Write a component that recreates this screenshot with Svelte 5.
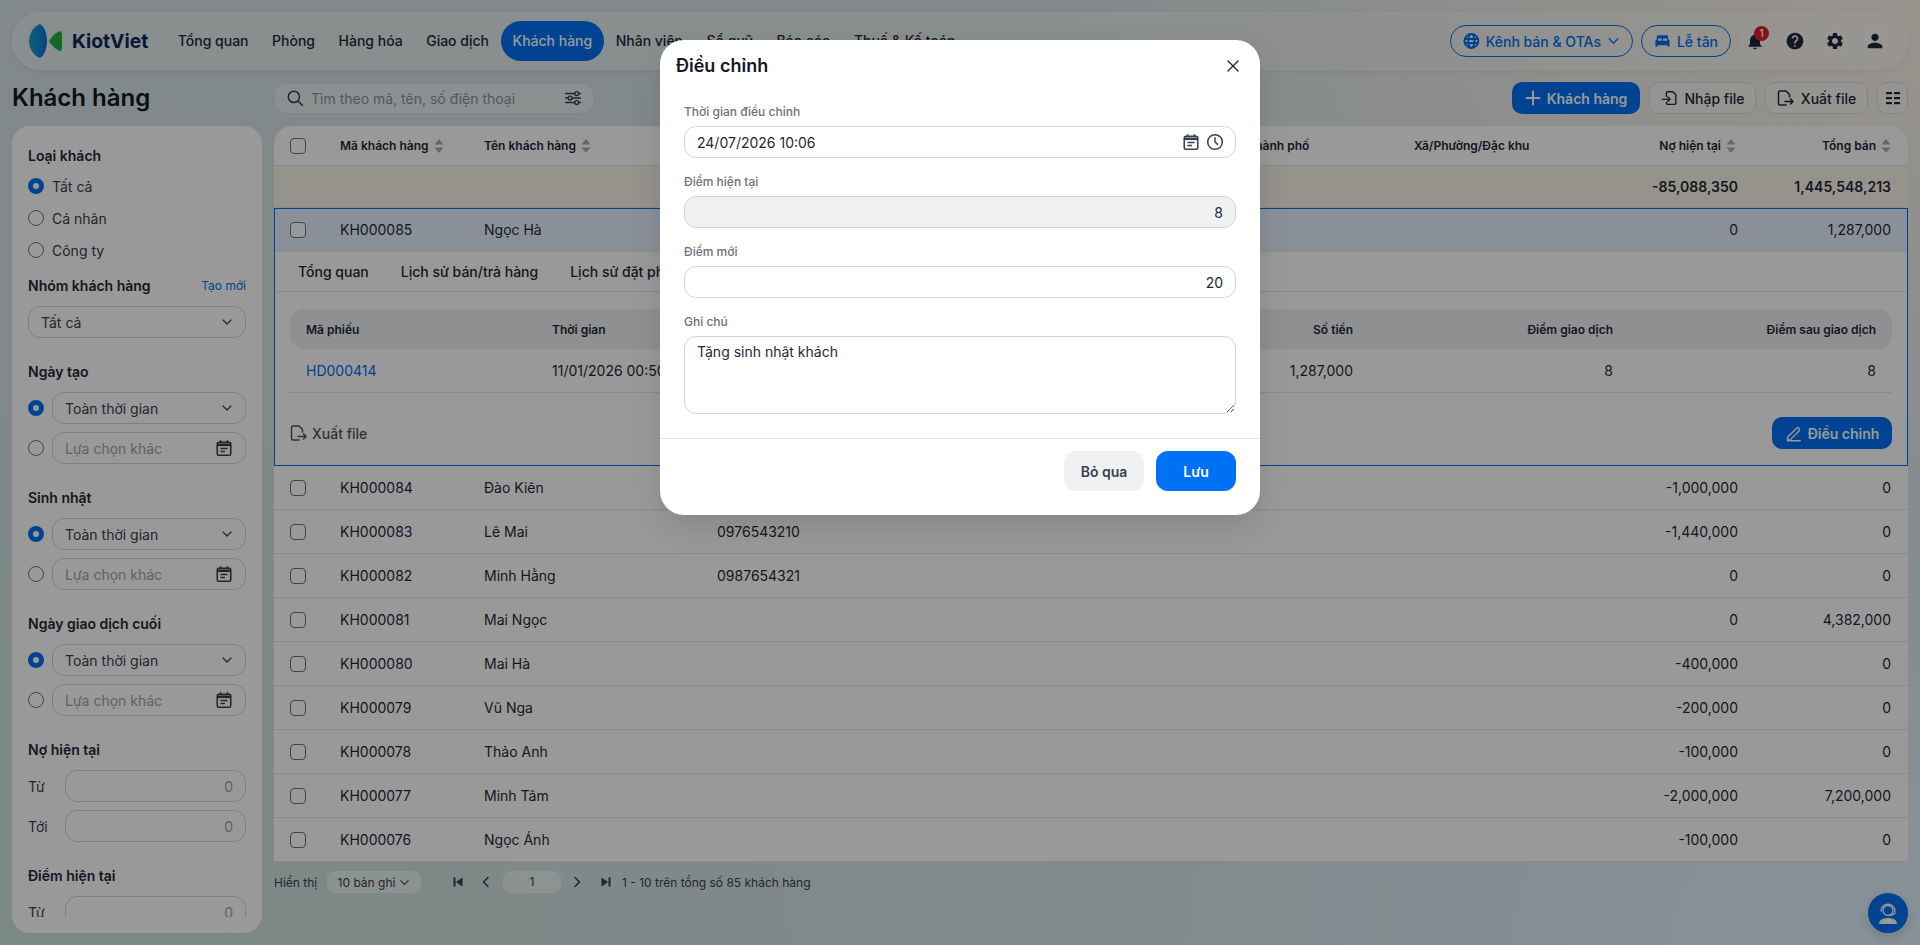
<script>
  const navItems = ["Tổng quan", "Phòng", "Hàng hóa", "Giao dịch", "Khách hàng", "Nhân viên", "Sổ quỹ", "Báo cáo", "Thuế & Kế toán"];
  const rows = [
    { code: "KH000084", name: "Đào Kiên", phone: "", debt: "-1,000,000", total: "0" },
    { code: "KH000083", name: "Lê Mai", phone: "0976543210", debt: "-1,440,000", total: "0" },
    { code: "KH000082", name: "Minh Hằng", phone: "0987654321", debt: "0", total: "0" },
    { code: "KH000081", name: "Mai Ngọc", phone: "", debt: "0", total: "4,382,000" },
    { code: "KH000080", name: "Mai Hà", phone: "", debt: "-400,000", total: "0" },
    { code: "KH000079", name: "Vũ Nga", phone: "", debt: "-200,000", total: "0" },
    { code: "KH000078", name: "Thảo Anh", phone: "", debt: "-100,000", total: "0" },
    { code: "KH000077", name: "Minh Tâm", phone: "", debt: "-2,000,000", total: "7,200,000" },
    { code: "KH000076", name: "Ngọc Ánh", phone: "", debt: "-100,000", total: "0" }
  ];
  const dateFilters = ["Ngày tạo", "Sinh nhật", "Ngày giao dịch cuối"];
</script>

{#snippet chevron(size = 12)}
  <svg width={size} height={size} viewBox="0 0 24 24" fill="none" stroke="currentColor" stroke-width="2.4" stroke-linecap="round" stroke-linejoin="round"><path d="M4 8l8 8 8-8" /></svg>
{/snippet}

{#snippet calendar(size = 18)}
  <svg width={size} height={size} viewBox="0 0 16 16" fill="none" stroke="currentColor"><rect x="2" y="3" width="12" height="11.5" rx="1.3" stroke-width="1.4" /><path d="M2 5.2h12" stroke-width="2.2" /><path d="M5 1v2.5M11 1v2.5" stroke-width="1.5" /><path d="M4.8 8.5h6.4M4.8 11.2h4" stroke-width="1.3" /></svg>
{/snippet}

{#snippet sort()}
  <svg class="sort" width="10" height="16" viewBox="0 0 10 16" fill="currentColor"><path d="M5 1l4.5 5.5h-9zM5 15L.5 9.5h9z" /></svg>
{/snippet}

{#snippet exportIcon(size = 20)}
  <svg class="export-ico" width={size} height={size} viewBox="0 0 20 20" fill="none" stroke="currentColor" stroke-width="1.5" stroke-linecap="round" stroke-linejoin="round"><path d="M11 17H5a1.500 1.500 0 0 1-1.500-1.500v-11A1.500 1.500 0 0 1 5 3h6l3.500 3.500V9" /><path d="M10 13.500h8M15.500 11l2.500 2.500-2.500 2.500" /></svg>
{/snippet}

{#snippet radio(on)}
  <span class="radio" class:on></span>
{/snippet}

{#snippet check()}
  <span class="check"></span>
{/snippet}

<div class="page">
  <header class="nav">
    <div class="logo">
      <svg width="36" height="36" viewBox="0 0 36 36">
        <defs>
          <linearGradient id="lens" x1="0" x2="1" y1="0" y2="0"><stop offset="0" stop-color="#1aa5c9" /><stop offset="1" stop-color="#0a6fe0" /></linearGradient>
        </defs>
        <path d="M14 1C8 3 3 10 3 18s5 15 11 17c4-2 7-9 7-17S18 3 14 1z" fill="url(#lens)" />
        <path d="M35 8c-5 1-9 5-12 10 3 5 7 9 12 10 1.500-3 2-6 2-10s-.5-7-2-10z" fill="#1fb141" />
      </svg>
      <span class="logo-text">KiotViet</span>
    </div>
    <nav class="menu">
      {#each navItems as item}
        <span class="menu-item" class:active={item === "Khách hàng"}>{item}</span>
      {/each}
    </nav>
    <div class="nav-right">
      <span class="pill wide">
        <svg width="18" height="18" viewBox="0 0 24 24" fill="none" stroke="currentColor" stroke-width="2.8"><circle cx="12" cy="12" r="10" /><ellipse cx="12" cy="12" rx="4.500" ry="10" /><path d="M2 9h20M2 15h20" /></svg>
        <span>Kênh bán &amp; OTAs</span>
        {@render chevron(14)}
      </span>
      <span class="pill">
        <svg width="20" height="20" viewBox="0 0 24 24" fill="currentColor"><path d="M20 10V6c0-1.100-.9-2-2-2H6c-1.100 0-2 .9-2 2v4c-1.100 0-2 .9-2 2v8h2.500l.5-2h14l.5 2H22v-8c0-1.100-.9-2-2-2zm-9 1.500H5.500V9.500c0-.6.4-1 1-1H10c.6 0 1 .4 1 1zm7.500 0H13V9.500c0-.6.4-1 1-1h3.500c.6 0 1 .4 1 1z" /></svg>
        <span>Lễ tân</span>
      </span>
      <span class="round">
        <svg width="20" height="20" viewBox="0 0 24 24" fill="currentColor"><path d="M12 22c1.100 0 2-.9 2-2h-4c0 1.100.89 2 2 2zm6-6v-5c0-3.070-1.640-5.640-4.500-6.320V4c0-.83-.67-1.500-1.500-1.500s-1.500.67-1.500 1.500v.68C7.630 5.360 6 7.920 6 11v5l-2 2v1h16v-1l-2-2z" /></svg>
        <b class="badge">1</b>
      </span>
      <span class="round">
        <svg width="20" height="20" viewBox="0 0 24 24" fill="currentColor"><path d="M12 2C6.480 2 2 6.480 2 12s4.480 10 10 10 10-4.480 10-10S17.520 2 12 2zm1 17h-2v-2h2v2zm2.070-7.750l-.9.92C13.450 12.900 13 13.500 13 15h-2v-.5c0-1.100.45-2.100 1.170-2.830l1.240-1.260c.37-.36.59-.86.59-1.410 0-1.100-.9-2-2-2s-2 .9-2 2H8c0-2.210 1.790-4 4-4s4 1.790 4 4c0 .88-.36 1.680-.93 2.250z" /></svg>
      </span>
      <span class="round">
        <svg width="20" height="20" viewBox="0 0 24 24" fill="currentColor"><path d="M19.140 12.940c.04-.3.06-.61.06-.94 0-.32-.02-.64-.07-.94l2.030-1.580c.18-.14.23-.41.12-.61l-1.920-3.320c-.12-.22-.37-.29-.59-.22l-2.390.96c-.5-.38-1.030-.7-1.620-.94l-.36-2.540c-.04-.24-.24-.41-.48-.41h-3.840c-.24 0-.43.17-.47.41l-.36 2.540c-.59.24-1.130.57-1.620.94l-2.390-.96c-.22-.08-.47 0-.59.22L2.740 8.870c-.12.21-.08.47.12.61l2.030 1.580c-.05.3-.09.63-.09.94s.02.64.07.94l-2.030 1.580c-.18.14-.23.41-.12.61l1.920 3.320c.12.22.37.29.59.22l2.390-.96c.5.38 1.030.7 1.620.94l.36 2.540c.05.24.24.41.48.41h3.840c.24 0 .44-.17.47-.41l.36-2.540c.59-.24 1.130-.56 1.620-.94l2.390.96c.22.08.47 0 .59-.22l1.920-3.320c.12-.22.07-.47-.12-.61l-2.010-1.580zM12 15.600c-1.980 0-3.600-1.620-3.600-3.600s1.620-3.600 3.600-3.600 3.600 1.620 3.600 3.600-1.620 3.600-3.600 3.600z" /></svg>
      </span>
      <span class="round">
        <svg width="22" height="22" viewBox="0 0 24 24" fill="currentColor"><path d="M12 12c2.210 0 4-1.790 4-4s-1.790-4-4-4-4 1.790-4 4 1.790 4 4 4zm0 2c-2.670 0-8 1.340-8 4v2h16v-2c0-2.660-5.330-4-8-4z" /></svg>
      </span>
    </div>
  </header>

  <div class="layout">
    <h1 class="title">Khách hàng</h1>

    <div class="toolbar">
      <div class="search">
        <svg width="18" height="18" viewBox="0 0 24 24" fill="none" stroke="#374151" stroke-width="2" stroke-linecap="round"><circle cx="10.500" cy="10.500" r="7.500" /><path d="M16 16l6 6" /></svg>
        <span class="placeholder">Tìm theo mã, tên, số điện thoại</span>
        <svg width="18" height="18" viewBox="0 0 24 24" fill="none" stroke="#374151" stroke-width="1.800" stroke-linecap="round"><path d="M2 6h12M20 6h2M2 12h3M11 12h11M2 18h12M20 18h2" /><circle cx="17" cy="6" r="2.600" /><circle cx="8" cy="12" r="2.600" /><circle cx="17" cy="18" r="2.600" /></svg>
      </div>
      <div class="actions">
        <button class="primary-sm add">
          <svg width="16" height="16" viewBox="0 0 16 16" fill="none" stroke="currentColor" stroke-width="2" stroke-linecap="round"><path d="M8 1.500v13M1.500 8h13" /></svg>
          Khách hàng
        </button>
        <button class="ghost file">
          <svg width="18" height="18" viewBox="0 0 20 20" fill="none" stroke="currentColor" stroke-width="1.500" stroke-linecap="round" stroke-linejoin="round"><path d="M6 8V4.500A1.500 1.500 0 0 1 7.500 3H13l3.500 3.500v9a1.500 1.500 0 0 1-1.500 1.500H7.500A1.500 1.500 0 0 1 6 15.500V15" /><path d="M1.500 11.500H10M7.500 9l2.500 2.500L7.500 14" /></svg>
          Nhập file
        </button>
        <button class="ghost file export">
          {@render exportIcon()}
          Xuất file
        </button>
        <button class="ghost square" aria-label="Cột">
          <svg width="16" height="16" viewBox="0 0 16 16" fill="currentColor"><rect x="1" y="2" width="6" height="2.200" /><rect x="9" y="2" width="6" height="2.200" /><rect x="1" y="7" width="6" height="2.200" /><rect x="9" y="7" width="6" height="2.200" /><rect x="1" y="12" width="6" height="2.200" /><rect x="9" y="12" width="6" height="2.200" /></svg>
        </button>
      </div>
    </div>

    <aside class="side">
      <div class="side-scroll">
        <section>
          <h3>Loại khách</h3>
          <div class="radios">
            <label class="radio-row">{@render radio(true)} Tất cả</label>
            <label class="radio-row">{@render radio(false)} Cá nhân</label>
            <label class="radio-row">{@render radio(false)} Công ty</label>
          </div>
        </section>
        <section class="tight">
          <div class="side-head"><h3>Nhóm khách hàng</h3><span class="link">Tạo mới</span></div>
          <div class="field">Tất cả {@render chevron()}</div>
        </section>
        {#each dateFilters as f}
          <section>
            <h3>{f}</h3>
            <div class="date-row">{@render radio(true)}<div class="field">Toàn thời gian {@render chevron()}</div></div>
            <div class="date-row">{@render radio(false)}<div class="field muted">Lựa chọn khác <span class="dark">{@render calendar()}</span></div></div>
          </section>
        {/each}
        <section>
          <h3>Nợ hiện tại</h3>
          <div class="range"><span>Từ</span><div class="field num">0</div></div>
          <div class="range"><span>Tới</span><div class="field num">0</div></div>
        </section>
        <section>
          <h3>Điểm hiện tại</h3>
          <div class="range"><span>Từ</span><div class="field num">0</div></div>
        </section>
      </div>
    </aside>

    <main class="main">
      <div class="table">
        <div class="row head">
          <span>{@render check()}</span>
          <span class="th">Mã khách hàng {@render sort()}</span>
          <span class="th">Tên khách hàng {@render sort()}</span>
          <span class="th">Điện thoại</span>
          <span class="th">Tỉnh/Thành phố</span>
          <span class="th">Xã/Phường/Đặc khu</span>
          <span class="th right-th debt-th">Nợ hiện tại {@render sort()}</span>
          <span class="th right-th">Tổng bán {@render sort()}</span>
        </div>
        <div class="row summary">
          <span></span><span></span><span></span><span></span><span></span><span></span>
          <b class="num-cell">-85,088,350</b>
          <b class="num-cell">1,445,548,213</b>
        </div>
        <div class="expanded">
          <div class="row selected">
            <span>{@render check()}</span>
            <span>KH000085</span>
            <span>Ngọc Hà</span>
            <span></span><span></span><span></span>
            <span class="num-cell">0</span>
            <span class="num-cell">1,287,000</span>
          </div>
          <div class="tabs">
            <span>Tổng quan</span>
            <span>Lịch sử bán/trả hàng</span>
            <span>Lịch sử đặt phòng</span>
            <span>Lịch sử điểm</span>
          </div>
          <div class="detail">
            <div class="sub-row sub-head">
              <span>Mã phiếu</span><span>Thời gian</span><span>Loại</span>
              <span class="r">Số tiền</span><span class="r">Điểm giao dịch</span><span class="r">Điểm sau giao dịch</span>
            </div>
            <div class="sub-row sub-body">
              <span class="code-link">HD000414</span><span>11/01/2026 00:50</span><span>Bán hàng</span>
              <span class="r">1,287,000</span><span class="r">8</span><span class="r">8</span>
            </div>
            <div class="detail-foot">
              <span class="export-link">{@render exportIcon()} Xuất file</span>
              <button class="primary-sm adjust">
                <svg width="17" height="17" viewBox="0 0 20 20" fill="none" stroke="currentColor" stroke-width="1.600" stroke-linecap="round" stroke-linejoin="round"><path d="M3 14.500L13.500 4a2.100 2.100 0 0 1 3 3L6 17.500H3zM3 18.500h15" /></svg>
                Điều chỉnh
              </button>
            </div>
          </div>
        </div>
        {#each rows as r}
          <div class="row">
            <span>{@render check()}</span>
            <span>{r.code}</span>
            <span>{r.name}</span>
            <span>{r.phone}</span>
            <span></span><span></span>
            <span class="num-cell">{r.debt}</span>
            <span class="num-cell">{r.total}</span>
          </div>
        {/each}
      </div>

      <div class="pager">
        <span class="show">Hiển thị</span>
        <span class="size">10 bản ghi {@render chevron(11)}</span>
        <span class="pg first">
          <svg width="10" height="10" viewBox="0 0 10 10" fill="currentColor"><rect x="0.500" y="0.500" width="2" height="9" /><path d="M9.500.5v9L3 5z" /></svg>
        </span>
        <span class="pg prev">
          <svg width="9" height="12" viewBox="0 0 9 12" fill="none" stroke="currentColor" stroke-width="1.600" stroke-linecap="round" stroke-linejoin="round"><path d="M7 1.500L2.500 6 7 10.500" /></svg>
        </span>
        <span class="page-no">1</span>
        <span class="pg next">
          <svg width="9" height="12" viewBox="0 0 9 12" fill="none" stroke="currentColor" stroke-width="1.600" stroke-linecap="round" stroke-linejoin="round"><path d="M2 1.500L6.500 6 2 10.500" /></svg>
        </span>
        <span class="pg last">
          <svg width="10" height="10" viewBox="0 0 10 10" fill="currentColor"><rect x="7.500" y="0.500" width="2" height="9" /><path d="M.5.5v9L7 5z" /></svg>
        </span>
        <span class="count">1 - 10 trên tổng số 85 khách hàng</span>
      </div>
    </main>
  </div>

  <span class="chat">
    <svg width="26" height="26" viewBox="0 0 26 26" fill="none">
      <path d="M4 24c0-4 4-6 9-6s9 2 9 6z" fill="#fff" />
      <circle cx="13" cy="10.500" r="5" stroke="#fff" stroke-width="1.300" />
      <path d="M6 11c0-9 14-9 14 0v1.500c0 1.500-2 2.500-5 2.500" stroke="#fff" stroke-width="1.300" stroke-linecap="round" />
    </svg>
  </span>

  <div class="overlay">
    <div class="dialog">
      <div class="dlg-head">
        <h2>Điều chỉnh</h2>
        <svg width="12" height="12" viewBox="0 0 12 12" fill="none" stroke="#1f2937" stroke-width="1.400" stroke-linecap="round"><path d="M1 1l10 10M11 1L1 11" /></svg>
      </div>
      <div class="dlg-body">
        <label class="dlg-label" for="f-time">Thời gian điều chỉnh</label>
        <div class="input-wrap">
          <input id="f-time" value="24/07/2026 10:06" readonly />
          <span class="input-icons">
            {@render calendar(18)}
            <svg width="18" height="18" viewBox="0 0 18 18" fill="none" stroke="currentColor" stroke-width="1.500" stroke-linecap="round" stroke-linejoin="round"><circle cx="9" cy="9" r="7.300" /><path d="M9 4.800V9l2.600 2.400" /></svg>
          </span>
        </div>
        <label class="dlg-label" for="f-cur">Điểm hiện tại</label>
        <input id="f-cur" class="end disabled" value="8" readonly />
        <label class="dlg-label" for="f-new">Điểm mới</label>
        <input id="f-new" class="end" value="20" readonly />
        <label class="dlg-label" for="f-note">Ghi chú</label>
        <textarea id="f-note" readonly value="Tặng sinh nhật khách"></textarea>
      </div>
      <div class="dlg-foot">
        <button class="btn cancel">Bỏ qua</button>
        <button class="btn save">Lưu</button>
      </div>
    </div>
  </div>
</div>

<style>
  :global(body) {
    margin: 0;
    font-family: Inter, "Noto Sans", sans-serif;
  }

  .page {
    position: relative;
    height: 945px;
    overflow: hidden;
    box-sizing: border-box;
    padding: 12px;
    display: flex;
    flex-direction: column;
    gap: 12px;
    font-size: 14px;
    color: #1f2937;
    background:
      radial-gradient(900px 600px at 100% 0%, #fff6ea 0%, rgba(255, 246, 234, 0) 100%),
      radial-gradient(900px 600px at 100% 100%, #e2f3ff 0%, rgba(226, 243, 255, 0) 100%),
      radial-gradient(900px 600px at 0% 100%, #cbe4dc 0%, rgba(203, 228, 220, 0) 100%),
      #d8e5e8;
  }

  button {
    font-family: inherit;
    cursor: pointer;
    border: none;
  }

  .export-ico {
    margin-left: -2px;
    flex: none;
  }

  /* top bar */
  .nav {
    height: 58px;
    flex: none;
    box-sizing: border-box;
    display: flex;
    align-items: center;
    padding-left: 13px;
    padding-right: 16px;
    border-radius: 29px;
    background: rgba(255, 255, 255, 0.3);
    border: 1px solid rgba(255, 255, 255, 0.25);
    box-shadow: 0 2px 8px rgba(0, 0, 0, 0.05);
  }
  .logo {
    display: flex;
    align-items: center;
    gap: 10px;
    width: 140px;
    flex: none;
  }
  .logo-text {
    font-size: 19.3px;
    font-weight: 700;
    color: #0a2a55;
  }
  .menu {
    display: flex;
    align-items: center;
    flex: 1;
  }
  .menu-item {
    padding: 0 11.75px;
    height: 40px;
    line-height: 40px;
    border-radius: 20px;
    font-weight: 500;
    white-space: nowrap;
  }
  .menu-item.active {
    background: #0070f4;
    color: #fff;
  }
  .nav-right {
    display: flex;
    align-items: center;
    gap: 8px;
  }
  .pill {
    height: 32px;
    box-sizing: border-box;
    display: flex;
    align-items: center;
    gap: 6px;
    padding: 0 12px;
    border: 1px solid #0070f4;
    border-radius: 16px;
    color: #0070f4;
    font-weight: 500;
    white-space: nowrap;
  }
  .pill.wide {
    width: 183px;
    justify-content: space-between;
  }
  .pill:not(.wide) {
    width: 90px;
  }
  .round {
    position: relative;
    width: 32px;
    height: 32px;
    border-radius: 50%;
    display: flex;
    align-items: center;
    justify-content: center;
    background: rgba(255, 255, 255, 0.4);
    color: #1f2937;
  }
  .badge {
    position: absolute;
    top: 1px;
    right: 2px;
    width: 15px;
    height: 15px;
    border-radius: 50%;
    background: #e11d2a;
    color: #fff;
    font-size: 10px;
    font-weight: 600;
    line-height: 15px;
    text-align: center;
  }

  /* page grid */
  .layout {
    flex: 1;
    min-height: 0;
    display: grid;
    grid-template-columns: 250px 1fr;
    grid-template-rows: 32px 1fr;
    column-gap: 12px;
    row-gap: 12px;
  }
  .title {
    margin: 0;
    font-size: 24px;
    font-weight: 600;
    line-height: 32px;
    color: #111827;
  }
  .toolbar {
    display: flex;
    align-items: center;
    justify-content: space-between;
  }
  .search {
    width: 320px;
    height: 31px;
    box-sizing: border-box;
    display: flex;
    align-items: center;
    gap: 7px;
    padding: 0 11px;
    border: 1px solid #d9dee3;
    border-radius: 12px;
    background: rgba(255, 255, 255, 0.45);
  }
  .placeholder {
    flex: 1;
    color: #8a919c;
  }
  .actions {
    display: flex;
    gap: 9px;
  }
  .primary-sm {
    height: 32px;
    display: inline-flex;
    align-items: center;
    justify-content: center;
    gap: 6px;
    border-radius: 10px;
    background: #0070f4;
    color: #fff;
    font-size: 14px;
    font-weight: 600;
    padding: 0;
  }
  .add {
    width: 128px;
  }
  .ghost {
    height: 32px;
    display: inline-flex;
    align-items: center;
    justify-content: center;
    gap: 6px;
    padding: 0;
    border: 1px solid #d9dee3;
    border-radius: 10px;
    background: rgba(255, 255, 255, 0.45);
    color: #1f2937;
    font-size: 14px;
    font-weight: 500;
  }
  .file {
    width: 107px;
  }
  .file.export {
    width: 103px;
  }
  .square {
    width: 31px;
  }

  /* sidebar */
  .side {
    background: #fff;
    border-radius: 18px;
    padding: 20px 16px 16px;
    display: flex;
    min-height: 0;
  }
  .side-scroll {
    flex: 1;
    overflow: hidden;
    display: flex;
    flex-direction: column;
    gap: 24px;
  }
  .side-scroll section {
    flex: none;
  }
  .side-scroll section.tight {
    margin-top: -6px;
  }
  h3 {
    margin: 0 0 10px;
    font-size: 14px;
    line-height: 20px;
    font-weight: 600;
    color: #1f2937;
  }
  .radios {
    display: flex;
    flex-direction: column;
    gap: 16px;
    padding-top: 2px;
  }
  .radio-row {
    height: 16px;
    display: flex;
    align-items: center;
    gap: 8px;
    color: #374151;
  }
  .radio {
    width: 16px;
    height: 16px;
    flex: none;
    box-sizing: border-box;
    border-radius: 50%;
    border: 1px solid #6b7280;
    background: #fff;
  }
  .radio.on {
    border: 5px solid #0070f4;
  }
  .side-head {
    display: flex;
    justify-content: space-between;
  }
  .link {
    color: #0070f4;
    font-size: 12px;
    line-height: 20px;
  }
  .field {
    height: 32px;
    flex: 1;
    min-width: 0;
    box-sizing: border-box;
    display: flex;
    align-items: center;
    justify-content: space-between;
    padding: 0 12px;
    border: 1px solid #d1d5db;
    border-radius: 12px;
    color: #374151;
  }
  .field.muted {
    color: #9ca3af;
  }
  .field.num {
    justify-content: flex-end;
    color: #9ca3af;
  }
  .dark {
    color: #374151;
    display: flex;
  }
  .date-row {
    display: flex;
    align-items: center;
    gap: 8px;
  }
  .date-row + .date-row {
    margin-top: 8px;
  }
  .range {
    display: flex;
    align-items: center;
  }
  .range + .range {
    margin-top: 8px;
  }
  .range span {
    width: 37px;
    flex: none;
    color: #374151;
  }

  /* table */
  .main {
    min-width: 0;
    display: flex;
    flex-direction: column;
  }
  .table {
    background: #fff;
    border-radius: 18px 18px 0 0;
    overflow: hidden;
  }
  .row {
    display: grid;
    grid-template-columns: 66px 144px 233px 500px 197px 224px 100px 153px;
    padding-right: 17px;
    height: 44px;
    box-sizing: border-box;
    align-items: center;
    border-bottom: 1px solid #e5e7eb;
    color: #1f2937;
  }
  .row > span:first-child {
    padding-left: 16px;
    display: flex;
  }
  .row.head {
    height: 40px;
    font-size: 12px;
  }
  .th {
    display: flex;
    align-items: center;
    gap: 5px;
    font-weight: 600;
    color: #1f2937;
    white-space: nowrap;
  }
  .right-th {
    justify-content: flex-end;
  }
  .debt-th {
    padding-right: 2px;
  }
  .sort {
    color: #a7adb6;
    flex: none;
  }
  .row.summary {
    height: 42px;
    background: #fbf6ec;
  }
  .num-cell {
    text-align: right;
  }
  b.num-cell {
    font-weight: 600;
    white-space: nowrap;
  }
  .check {
    width: 16px;
    height: 16px;
    box-sizing: border-box;
    border: 1px solid #6b7280;
    border-radius: 4px;
    background: #fff;
    display: block;
  }
  .expanded {
    outline: 1px solid #0070f4;
    outline-offset: -1px;
    position: relative;
    height: 258px;
  }
  .row.selected {
    background: #e6f1fd;
  }
  .tabs {
    height: 40px;
    box-sizing: border-box;
    display: flex;
    align-items: center;
    gap: 32px;
    padding-left: 24px;
    border-bottom: 1px solid #e5e7eb;
    font-weight: 500;
  }
  .detail {
    padding: 17px 16px 17px 16px;
  }
  .sub-row {
    display: grid;
    grid-template-columns: 246px 200px 200px 401px 260px 1fr;
    padding: 0 16px;
    align-items: center;
  }
  .sub-row .r {
    text-align: right;
  }
  .sub-head {
    height: 40px;
    border-radius: 14px;
    background: #eef0f3;
    font-size: 12px;
    font-weight: 600;
  }
  .sub-body {
    height: 43px;
    border-bottom: 1px solid #e5e7eb;
  }
  .code-link {
    color: #0070f4;
  }
  .detail-foot {
    margin-top: 24px;
    display: flex;
    align-items: center;
    justify-content: space-between;
  }
  .export-link {
    display: flex;
    align-items: center;
    gap: 4px;
    color: #4b5563;
    font-weight: 500;
  }
  .adjust {
    width: 120px;
  }

  /* pager */
  .pager {
    margin-top: 9px;
    height: 22px;
    display: flex;
    align-items: center;
    font-size: 12px;
    color: #374151;
  }
  .show {
    width: 53px;
    flex: none;
  }
  .size {
    width: 94px;
    height: 22px;
    box-sizing: border-box;
    display: flex;
    align-items: center;
    justify-content: center;
    gap: 4px;
    border-radius: 8px;
    background: rgba(255, 255, 255, 0.55);
  }
  .pg {
    display: flex;
    color: #374151;
  }
  .first {
    margin-left: 32px;
  }
  .prev {
    margin-left: 18px;
  }
  .page-no {
    width: 58px;
    height: 22px;
    line-height: 22px;
    margin-left: 13px;
    text-align: center;
    border-radius: 8px;
    background: rgba(255, 255, 255, 0.55);
  }
  .next {
    margin-left: 12px;
  }
  .last {
    margin-left: 19px;
  }
  .count {
    margin-left: 11px;
  }

  .chat {
    position: absolute;
    right: 12px;
    bottom: 12px;
    width: 40px;
    height: 40px;
    border-radius: 50%;
    background: #0070f4;
    display: flex;
    align-items: center;
    justify-content: center;
    box-shadow: 0 4px 12px rgba(0, 0, 0, 0.15);
  }

  /* dialog */
  .overlay {
    position: absolute;
    inset: 0;
    background: rgba(0, 0, 0, 0.4);
    display: flex;
    justify-content: center;
    align-items: flex-start;
    padding-top: 40px;
  }
  .dialog {
    width: 600px;
    height: 475px;
    border-radius: 24px;
    background: #fff;
    box-shadow: 0 12px 32px rgba(0, 0, 0, 0.12);
    display: flex;
    flex-direction: column;
  }
  .dlg-head {
    height: 64px;
    flex: none;
    box-sizing: border-box;
    padding: 14px 21px 0 16px;
    display: flex;
    justify-content: space-between;
    align-items: flex-start;
  }
  .dlg-head svg {
    margin-top: 6px;
  }
  h2 {
    margin: 0;
    font-size: 18px;
    line-height: 24px;
    font-weight: 600;
    color: #111827;
  }
  .dlg-body {
    flex: 1;
    padding: 0 24px;
    display: flex;
    flex-direction: column;
  }
  .dlg-label {
    display: block;
    font-size: 12px;
    line-height: 16px;
    color: #6b7280;
    margin-bottom: 6px;
    font-weight: 500;
  }
  .dlg-label:not(:first-child) {
    margin-top: 16px;
  }
  input,
  textarea {
    font-family: inherit;
    font-size: 14px;
    color: #1f2937;
    width: 100%;
    box-sizing: border-box;
    border: 1px solid #d1d5db;
    border-radius: 12px;
    outline: none;
    background: #fff;
  }
  input {
    height: 32px;
    padding: 0 12px;
  }
  input.end {
    text-align: right;
  }
  input.disabled {
    background: #f0f1f3;
  }
  textarea {
    height: 78px;
    padding: 5px 12px;
    line-height: 20px;
    display: block;
  }
  .input-wrap {
    position: relative;
  }
  .input-icons {
    position: absolute;
    right: 12px;
    top: 7px;
    display: flex;
    align-items: center;
    gap: 6px;
    color: #374151;
  }
  .dlg-foot {
    height: 77px;
    flex: none;
    box-sizing: border-box;
    border-top: 1px solid #e5e7eb;
    padding: 12px 24px 0;
    display: flex;
    justify-content: flex-end;
    gap: 12px;
  }
  .btn {
    width: 80px;
    height: 40px;
    border-radius: 12px;
    font-size: 14px;
    font-weight: 600;
  }
  .cancel {
    background: #f0f1f3;
    color: #374151;
  }
  .save {
    background: #0070f4;
    color: #fff;
  }
</style>
